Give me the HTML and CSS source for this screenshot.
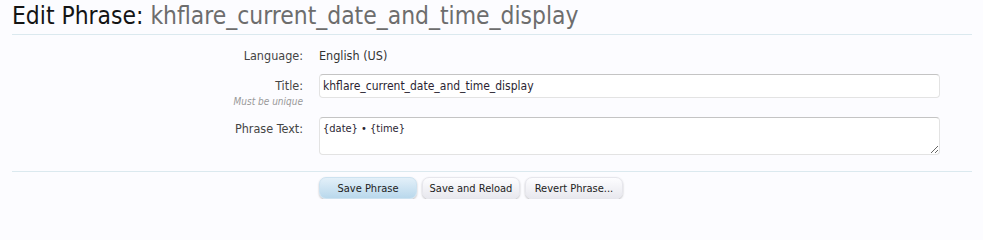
FILE: index.html
```html
<!DOCTYPE html>
<html>
<head>
<meta charset="utf-8">
<title>Edit Phrase</title>
<link rel="stylesheet" href="styles.css">
</head>
<body>
<div class="page">
  <h1 class="title">Edit Phrase: <span class="title-sub">khflare_current_date_and_time_display</span></h1>
  <form class="form">
    <div class="row row-text">
      <div class="label">Language:</div>
      <div class="value">English (US)</div>
    </div>
    <div class="row row-title">
      <div class="label">Title:<span class="hint">Must be unique</span></div>
      <div class="value"><input class="input" type="text" value="khflare_current_date_and_time_display"></div>
    </div>
    <div class="row row-area">
      <div class="label">Phrase Text:</div>
      <div class="value"><textarea class="input textarea">{date} • {time}</textarea></div>
    </div>
    <div class="actions">
      <div class="label"></div>
      <div class="buttons">
        <button type="button" class="btn btn-primary">Save Phrase</button>
        <button type="button" class="btn">Save and Reload</button>
        <button type="button" class="btn">Revert Phrase...</button>
      </div>
    </div>
  </form>
</div>
</body>
</html>
```
FILE: styles.css
```css
html, body {
  margin: 0;
  padding: 0;
  background: #fcfcff;
}
body {
  font-family: "DejaVu Sans Condensed", "DejaVu Sans", sans-serif;
  font-size: 12.5px;
  color: #333;
}
.page {
  padding: 0 11px 0 12px;
}
.title {
  margin: 0;
  padding: 2px 0 4px 0;
  font-weight: normal;
  font-size: 24.4px;
  line-height: 28px;
  color: #141414;
  border-bottom: 1px solid #dbe9ef;
}
.title-sub {
  color: #6d6d6d;
}
.form {
  margin: 0;
  padding: 13px 0 0 0;
}
.row, .actions {
  display: grid;
  grid-template-columns: 291px 621px;
  column-gap: 16px;
  align-items: start;
}
.row-text {
  margin-bottom: 10px;
}
.row-title {
  margin-bottom: 9px;
}
.row-area {
  margin-bottom: 16px;
}
.label {
  text-align: right;
  color: #444;
  padding-top: 4px;
  line-height: 16px;
}
.row-text .label, .row-text .value {
  padding-top: 0;
}
.value {
  color: #333;
  line-height: 16px;
}
.hint {
  display: block;
  font-size: 10px;
  font-style: italic;
  color: #999;
  line-height: 12px;
  margin-top: 2px;
}
.input {
  box-sizing: border-box;
  display: block;
  width: 100%;
  height: 24px;
  margin: 0;
  padding: 3px 3px;
  font-family: inherit;
  font-size: 12px;
  color: #2b1f33;
  background: #fff;
  border: 1px solid #e3e3e3;
  border-top-color: #c4c4c4;
  border-radius: 4px;
  outline: none;
}
.textarea {
  height: 38px;
  resize: vertical;
  font-size: 11px;
  line-height: 14px;
  padding: 4px 3px;
}
.actions {
  border-top: 1px solid #dbe9ef;
  padding-top: 5px;
}
.buttons {
  display: flex;
  gap: 5px;
}
.btn {
  box-sizing: border-box;
  height: 22px;
  width: 98px;
  padding: 0 6px;
  font-family: inherit;
  font-size: 11px;
  color: #222;
  border: 1px solid #e6e6ec;
  border-radius: 7px;
  background: linear-gradient(#fdfdff, #e8e8ee);
  box-shadow: 0 1px 2px rgba(0,0,0,0.25);
  cursor: pointer;
}
.btn-primary {
  background: linear-gradient(#e3f0f9, #b9d8ec);
  border-color: #cde2f0;
}
```
